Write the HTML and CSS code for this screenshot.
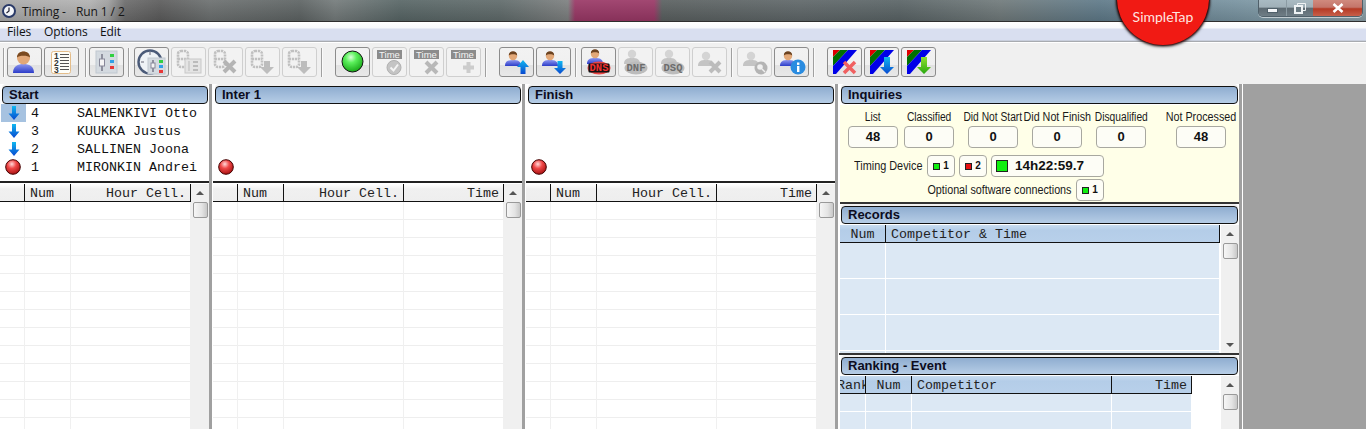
FILE: index.html
```html
<!DOCTYPE html>
<html lang="en">
<head>
<meta charset="utf-8">
<title>Timing - Run 1 / 2</title>
<link rel="stylesheet" href="styles.css">
</head>
<body>
<svg class="defs" aria-hidden="true">
  <defs>
    <radialGradient id="gBall" cx=".42" cy=".3" r=".75"><stop offset="0" stop-color="#d8ffd8"/><stop offset=".35" stop-color="#5cf05c"/><stop offset="1" stop-color="#10a010"/></radialGradient>
    <radialGradient id="rBall" cx=".42" cy=".3" r=".75"><stop offset="0" stop-color="#ffd8d8"/><stop offset=".4" stop-color="#f04848"/><stop offset="1" stop-color="#a00c0c"/></radialGradient>
    <linearGradient id="body" x1="0" y1="0" x2="0" y2="1"><stop offset="0" stop-color="#8c96f0"/><stop offset="1" stop-color="#2c3cc8"/></linearGradient>
    <linearGradient id="arrB" x1="0" y1="0" x2="0" y2="1"><stop offset="0" stop-color="#10b8f0"/><stop offset="1" stop-color="#0848d0"/></linearGradient>
    <linearGradient id="arrG" x1="0" y1="0" x2="0" y2="1"><stop offset="0" stop-color="#90e030"/><stop offset="1" stop-color="#28a810"/></linearGradient>
    <g id="pSmall"><path d="M5 18c0-5 3-6 8-6s8 1 8 6z" fill="url(#body)"/><circle cx="13" cy="8" r="4.2" fill="#e2a878"/><path d="M8.8 7.5c0-3 2-4.3 4.2-4.3s4.2 1.3 4.2 4.3c-1.5-1.8-6.900-1.8-8.400 0z" fill="#6b4220"/></g>
    <g id="pGray"><path d="M5 18c0-5 3-6 8-6s8 1 8 6z" fill="#c4c4c4"/><circle cx="13" cy="8" r="4.2" fill="#d4d4d4"/></g>
    <g id="seg" fill="none" stroke="#c0c0c0" stroke-width="2.600" stroke-dasharray="2.200 .8"><rect x="6" y="3" width="10" height="16" rx="3"/><path d="M6 11h10"/></g>
    <g id="stripeIcon"><path d="M5 2h7L5 9z" fill="#e00000"/><path d="M12 2h8L5 18V9z" fill="#007000"/><path d="M20 2h9L8 26H5v-8z" fill="#0000e8"/></g>
    <symbol id="iPerson" viewBox="0 0 33 28"><path d="M5 25c0-7 5-9 10.500-9S26 18 26 25z" fill="url(#body)"/><circle cx="15.500" cy="10" r="6.500" fill="#e2a878"/><path d="M9 9.500c0-4 3-6 6.500-6s6.500 2 6.500 6c-2-2.500-11-2.500-13 0z" fill="#7a4a20"/></symbol>
    <symbol id="iList" viewBox="0 0 33 28"><rect x="6.500" y="3.500" width="19" height="22" rx="2" fill="#fdfdf8" stroke="#e4bd8a"/><text class="ic-num" x="9" y="10.500">1</text><text class="ic-num" x="9" y="17.500">2</text><text class="ic-num" x="9" y="24.500">3</text><path d="M15 6.500h9M15 9.500h9M15 12.500h9M15 15.500h9M15 18.500h9M15 21.500h9" stroke="#555"/></symbol>
    <symbol id="iSliders" viewBox="0 0 33 28"><rect x="6" y="3" width="21" height="22" fill="#d4dae0" stroke="#c0c8d0"/><path d="M12 6v17" stroke="#778" stroke-width="1.500"/><rect x="9.500" y="11" width="5" height="7" fill="#f4f4f4" stroke="#889"/><rect x="20" y="6" width="4" height="3" fill="#30d040"/><rect x="20" y="12" width="4" height="3" fill="#30a0e8"/><rect x="20" y="18" width="4" height="3" fill="#e83838"/></symbol>
    <symbol id="iClock" viewBox="0 0 33 28"><circle cx="15" cy="14" r="11.500" fill="#eef2f6" stroke="#4a5a78" stroke-width="2.400"/><path d="M15 4v3M6 14h3" stroke="#667"/><rect x="13" y="10" width="17" height="16" fill="#d4dae0" stroke="#c0c8d0"/><path d="M18 12v12" stroke="#778" stroke-width="1.500"/><rect x="16" y="15" width="4" height="5" fill="#f4f4f4" stroke="#889"/><rect x="24" y="12" width="4" height="3" fill="#30d040"/><rect x="24" y="17" width="4" height="3" fill="#30a0e8"/><rect x="24" y="22" width="4" height="3" fill="#e83838"/></symbol>
    <symbol id="iSegGrid" viewBox="0 0 33 28"><use href="#seg"/><rect x="13" y="11" width="16" height="14" fill="#e4e4e4" stroke="#c8c8c8"/><path d="M17 13v10" stroke="#bbb"/><path d="M21 14h5M21 18h5M21 22h5" stroke="#bbb" stroke-width="2"/></symbol>
    <symbol id="iSegX" viewBox="0 0 33 28"><use href="#seg"/><path d="M15 13l11 11M26 13L15 24" stroke="#b4b4b4" stroke-width="4"/></symbol>
    <symbol id="iSegDown" viewBox="0 0 33 28"><use href="#seg"/><path d="M18 13h6v6h4l-7 7-7-7h4z" fill="#bdbdbd"/></symbol>
    <symbol id="iBall" viewBox="0 0 33 28"><circle cx="16.500" cy="13.500" r="10.500" fill="url(#gBall)" stroke="#111"/></symbol>
    <symbol id="iTCheck" viewBox="0 0 33 28"><rect x="4" y="2" width="25" height="9" fill="#8c8c8c"/><text class="ic-time" x="16.500" y="10">Time</text><circle cx="21" cy="19.500" r="7" fill="#c4c4c4" stroke="#b0b0b0"/><path d="M17.500 19.500l3 3 4.500-6" fill="none" stroke="#f4f4f4" stroke-width="2"/></symbol>
    <symbol id="iTX" viewBox="0 0 33 28"><rect x="4" y="2" width="25" height="9" fill="#8c8c8c"/><text class="ic-time" x="16.500" y="10">Time</text><path d="M16 14l11 11M27 14L16 25" stroke="#b8b8b8" stroke-width="4"/></symbol>
    <symbol id="iTPlus" viewBox="0 0 33 28"><rect x="4" y="2" width="25" height="9" fill="#8c8c8c"/><text class="ic-time" x="16.500" y="10">Time</text><path d="M21.500 14v11M16 19.500h11" stroke="#ccc" stroke-width="4"/></symbol>
    <symbol id="iPUp" viewBox="0 0 33 28"><use href="#pSmall"/><path d="M23 12l6 7h-3.500v7h-5v-7H17z" fill="url(#arrB)"/></symbol>
    <symbol id="iPDown" viewBox="0 0 33 28"><use href="#pSmall"/><path d="M20.500 13h5v7H29l-6 6-6-6h3.500z" fill="url(#arrB)"/></symbol>
    <symbol id="iDNS" viewBox="0 0 33 28"><use href="#pSmall" x="0" y="-2"/><ellipse cx="17" cy="20" rx="11.500" ry="6.500" fill="#ec4444"/><rect x="6.500" y="15.500" width="21" height="9" rx="1" fill="#111"/><text class="ic-dns" x="17" y="23.300" fill="#f03030">DNS</text></symbol>
    <symbol id="iDNF" viewBox="0 0 33 28"><use href="#pGray" x="0" y="-2"/><ellipse cx="17" cy="20" rx="11.500" ry="6.500" fill="#bcbcbc"/><text class="ic-dns" x="17" y="23.300" fill="#6c6c6c">DNF</text></symbol>
    <symbol id="iDSQ" viewBox="0 0 33 28"><use href="#pGray" x="0" y="-2"/><ellipse cx="17" cy="20" rx="11.500" ry="6.500" fill="#bcbcbc"/><text class="ic-dns" x="17" y="23.300" fill="#6c6c6c">DSQ</text></symbol>
    <symbol id="iPX" viewBox="0 0 33 28"><use href="#pGray"/><path d="M17 14l10 10M27 14L17 24" stroke="#bcbcbc" stroke-width="4"/></symbol>
    <symbol id="iPFind" viewBox="0 0 33 28"><use href="#pGray"/><circle cx="23" cy="20" r="6.500" fill="#b4b4b4"/><circle cx="22" cy="19" r="2.800" fill="#f0f0f0"/><path d="M24 21l3 3" stroke="#f0f0f0" stroke-width="1.500"/></symbol>
    <symbol id="iPInfo" viewBox="0 0 33 28"><use href="#pSmall"/><circle cx="23" cy="19" r="7.500" fill="#2a8ce0"/><rect x="22" y="18" width="2.400" height="6" fill="#fff"/><rect x="22" y="14.500" width="2.400" height="2.400" fill="#fff"/></symbol>
    <symbol id="iStripeX" viewBox="0 0 33 28"><use href="#stripeIcon"/><path d="M16 14l11 11M27 14L16 25" stroke="#f06060" stroke-width="3.500"/></symbol>
    <symbol id="iStripeB" viewBox="0 0 33 28"><use href="#stripeIcon"/><path d="M19 9h6v10h4l-7 7-7-7h4z" fill="url(#arrB)"/></symbol>
    <symbol id="iStripeG" viewBox="0 0 33 28"><use href="#stripeIcon"/><path d="M19 9h6v10h4l-7 7-7-7h4z" fill="url(#arrG)"/></symbol>
    <symbol id="iArrow" viewBox="0 0 12 14"><path d="M4 0h4v7.500h3.500L6 14 .500 7.500H4z" fill="url(#arrB)"/></symbol>
    <symbol id="iRed" viewBox="0 0 16 16"><circle cx="8" cy="8" r="7.300" fill="url(#rBall)" stroke="#400"/></symbol>
  </defs>
</svg>

<header class="titlebar">
  <svg class="app-icon" viewBox="0 0 14 14"><circle cx="7" cy="7" r="6" fill="#f4f6fa" stroke="#2a3a68" stroke-width="2"/><path d="M7 3.500V7l-2.500 2" fill="none" stroke="#223" stroke-width="1.200"/></svg>
  <span class="title-text">Timing -</span>
  <span class="title-run">Run 1 / 2</span>
  <div class="win-controls">
    <div class="win-btn win-min"><span class="min-glyph"></span></div>
    <div class="win-btn win-max"><svg viewBox="0 0 12 11" class="max-glyph"><path d="M3.500 3V.500h8v7H9" fill="none" stroke="#eef2f4"/><rect x="1" y="3" width="7" height="7" fill="#6a7a82" stroke="#eef2f4" stroke-width="2"/></svg></div>
    <div class="win-btn win-close"><svg viewBox="0 0 12 10" class="x-glyph"><path d="M1.500 1l9 8M10.500 1l-9 8" stroke="#fff" stroke-width="2.600"/></svg></div>
  </div>
</header>
<div class="badge"><span>SimpleTap</span></div>

<nav class="menubar"><span class="m-files">Files</span><span class="m-options">Options</span><span class="m-edit">Edit</span></nav>

<div class="toolbar">
  <span class="sep sep-first"></span>
  <button class="tb"><svg><use href="#iPerson"/></svg></button>
  <button class="tb"><svg><use href="#iList"/></svg></button>
  <span class="sep sep-b"></span>
  <button class="tb"><svg><use href="#iSliders"/></svg></button>
  <span class="sep"></span>
  <button class="tb"><svg><use href="#iClock"/></svg></button>
  <button class="tb off"><svg><use href="#iSegGrid"/></svg></button>
  <button class="tb off"><svg><use href="#iSegX"/></svg></button>
  <button class="tb off"><svg><use href="#iSegDown"/></svg></button>
  <button class="tb off"><svg><use href="#iSegDown"/></svg></button>
  <span class="sep wide"></span>
  <button class="tb"><svg><use href="#iBall"/></svg></button>
  <button class="tb off"><svg><use href="#iTCheck"/></svg></button>
  <button class="tb off"><svg><use href="#iTX"/></svg></button>
  <button class="tb off"><svg><use href="#iTPlus"/></svg></button>
  <span class="sep wide"></span>
  <button class="tb"><svg><use href="#iPUp"/></svg></button>
  <button class="tb"><svg><use href="#iPDown"/></svg></button>
  <span class="sep"></span>
  <button class="tb"><svg><use href="#iDNS"/></svg></button>
  <button class="tb off"><svg><use href="#iDNF"/></svg></button>
  <button class="tb off"><svg><use href="#iDSQ"/></svg></button>
  <button class="tb off"><svg><use href="#iPX"/></svg></button>
  <span class="sep"></span>
  <button class="tb off"><svg><use href="#iPFind"/></svg></button>
  <button class="tb"><svg><use href="#iPInfo"/></svg></button>
  <span class="sep wide"></span>
  <button class="tb"><svg><use href="#iStripeX"/></svg></button>
  <button class="tb"><svg><use href="#iStripeB"/></svg></button>
  <button class="tb"><svg><use href="#iStripeG"/></svg></button>
</div>

<main class="main">
  <section class="panel p-start">
    <h2 class="head">Start</h2>
    <div class="list">
      <div class="row"><span class="ico sel"><svg class="arrow"><use href="#iArrow"/></svg></span><span class="num">4</span><span class="name">SALMENKIVI Otto</span></div>
      <div class="row"><span class="ico"><svg class="arrow"><use href="#iArrow"/></svg></span><span class="num">3</span><span class="name">KUUKKA Justus</span></div>
      <div class="row"><span class="ico"><svg class="arrow"><use href="#iArrow"/></svg></span><span class="num">2</span><span class="name">SALLINEN Joona</span></div>
      <div class="row"><span class="ico"><svg class="ball"><use href="#iRed"/></svg></span><span class="num">1</span><span class="name">MIRONKIN Andrei</span></div>
    </div>
    <div class="tablewrap">
      <div class="table">
        <div class="thead"><div class="th w25"></div><div class="th w46">Num</div><div class="th w120 right">Hour Cell.</div></div>
        <div class="tbody"><div class="td w25"></div><div class="td w46"></div><div class="td w120"></div></div>
      </div>
      <div class="scroll"><span class="up"></span><span class="thumb"></span></div>
    </div>
  </section>

  <section class="panel">
    <h2 class="head">Inter 1</h2>
    <div class="list"><div class="row"><span class="ico"><svg class="ball"><use href="#iRed"/></svg></span></div></div>
    <div class="tablewrap">
      <div class="table">
        <div class="thead"><div class="th w25"></div><div class="th w46">Num</div><div class="th w120 right">Hour Cell.</div><div class="th w100 right">Time</div></div>
        <div class="tbody"><div class="td w25"></div><div class="td w46"></div><div class="td w120"></div><div class="td w100"></div></div>
      </div>
      <div class="scroll"><span class="up"></span><span class="thumb"></span></div>
    </div>
  </section>

  <section class="panel">
    <h2 class="head">Finish</h2>
    <div class="list"><div class="row"><span class="ico"><svg class="ball"><use href="#iRed"/></svg></span></div></div>
    <div class="tablewrap">
      <div class="table">
        <div class="thead"><div class="th w25"></div><div class="th w46">Num</div><div class="th w120 right">Hour Cell.</div><div class="th w100 right">Time</div></div>
        <div class="tbody"><div class="td w25"></div><div class="td w46"></div><div class="td w120"></div><div class="td w100"></div></div>
      </div>
      <div class="scroll"><span class="up"></span><span class="thumb"></span></div>
    </div>
  </section>

  <aside class="side">
    <section class="inq">
      <h2 class="head">Inquiries</h2>
      <div class="inq-body">
        <div class="stats">
          <div class="stat"><span class="lbl">List</span><b class="box">48</b></div>
          <div class="stat g6"><span class="lbl">Classified</span><b class="box">0</b></div>
          <div class="stat g14"><span class="lbl">Did Not Start</span><b class="box">0</b></div>
          <div class="stat g14"><span class="lbl lbl-wide">Did Not Finish</span><b class="box">0</b></div>
          <div class="stat g14"><span class="lbl">Disqualified</span><b class="box">0</b></div>
          <div class="stat g30"><span class="lbl lbl-wide">Not Processed</span><b class="box">48</b></div>
        </div>
        <div class="device">
          <span class="lbl dev-lbl">Timing Device</span>
          <b class="box chip"><i class="led green"></i>1</b>
          <b class="box chip"><i class="led red"></i>2</b>
          <b class="box clock"><i class="led big green"></i>14h22:59.7</b>
        </div>
        <div class="optional">
          <span class="lbl opt-lbl">Optional software connections</span>
          <b class="box chip"><i class="led green"></i>1</b>
        </div>
      </div>
    </section>

    <section class="rec">
      <h2 class="head">Records</h2>
      <div class="tablewrap blue">
        <div class="table">
          <div class="thead"><div class="th w46 center">Num</div><div class="th w334">Competitor &amp; Time</div></div>
          <div class="tbody tall"><div class="td w46"></div><div class="td w334"></div></div>
        </div>
        <div class="scroll"><span class="up"></span><span class="thumb"></span><span class="down"></span></div>
      </div>
    </section>

    <section class="rank">
      <h2 class="head">Ranking - Event</h2>
      <div class="tablewrap blue">
        <div class="table">
          <div class="thead"><div class="th w26 clip">Rank</div><div class="th w46 center">Num</div><div class="th w200">Competitor</div><div class="th w80 right">Time</div></div>
          <div class="tbody"><div class="td w26"></div><div class="td w46"></div><div class="td w200"></div><div class="td w80"></div></div>
        </div>
        <div class="scroll"><span class="up"></span><span class="thumb"></span></div>
      </div>
    </section>
  </aside>
  <div class="desk"></div>
</main>
</body>
</html>
```
FILE: styles.css
```css
* { box-sizing: border-box; }
html, body { margin: 0; padding: 0; }
body {
  width: 1366px; height: 429px; overflow: hidden; position: relative;
  background: #fff; font-family: "Liberation Sans", Arial, sans-serif; color: #111;
}
.defs { position: absolute; width: 0; height: 0; }
.ic-num { font: 700 8.500px "Liberation Sans", sans-serif; fill: #333; }
.ic-time { font: 400 9.500px "Liberation Sans", sans-serif; fill: #f4f4f4; text-anchor: middle; }
.ic-dns { font: 700 10.500px "Liberation Mono", monospace; text-anchor: middle; }

/* title bar */
.titlebar {
  height: 22px; display: flex; align-items: flex-start;
  border-bottom: 1px solid #2e2e2e;
  background:
    linear-gradient(180deg, rgba(255,255,255,.08), rgba(0,0,0,.12)),
    linear-gradient(90deg, #ababab 0, #b2b2b2 90px, #a0a0a0 108px, #6c6c6c 125px, #5c5c5c 160px, #6c7070 210px, #5e6464 300px, #747b7b 335px, #586666 400px, #606b6b 500px, #7d8080 568px, #9a3866 575px, #9a3866 654px, #5a6060 662px, #5f6769 800px, #5a6466 900px, #707a7b 1000px, #5f7a89 1100px, #7d98a5 1260px, #8ca0a8 1366px);
}
.app-icon { width: 14px; height: 14px; margin: 4px 0 0 2px; flex: none; }
.title-text, .title-run { font: 400 12px/23px "Open Sans", sans-serif; letter-spacing: -.1px; color: #161616; }
.title-text { margin-left: 6px; width: 54px; }
.title-run { width: 60px; }
.win-controls {
  margin-left: auto; margin-right: 3px; display: flex; height: 17px;
  border: 1px solid #50606a; border-top: 0; border-radius: 0 0 5px 5px; overflow: hidden;
  box-shadow: 0 1px 0 rgba(255,255,255,.55);
}
.win-btn { display: flex; align-items: center; justify-content: center; height: 100%; }
.win-min { width: 28px; background: linear-gradient(#a9bac2 0, #a0b0b8 45%, #5d6a72 50%, #6f7d85); border-right: 1px solid #8b9ba3; padding-top: 4px; }
.win-max { width: 26px; background: linear-gradient(#a9bac2 0, #a0b0b8 45%, #5d6a72 50%, #6f7d85); }
.win-close { width: 49px; background: linear-gradient(#d08a7e 0, #c4756a 45%, #b53a25 55%, #c8604a); }
.min-glyph { width: 9px; height: 3px; background: #f4f6f8; border: 1px solid #50606a; box-sizing: content-box; }
.max-glyph { width: 12px; height: 11px; }
.x-glyph { width: 12px; height: 10px; }

/* overlay badge */
.badge {
  position: absolute; left: 1117px; top: -47px; width: 92px; height: 92px; border-radius: 50%;
  background: #f11a14; box-shadow: 0 0 2px 1px #2a0505, 0 1px 3px 1px rgba(0,0,0,.5);
  display: flex; align-items: flex-end; justify-content: center; padding-bottom: 20px; z-index: 5;
}
.badge span { font: 400 14px/17px "Lato", "Liberation Sans", sans-serif; color: #ffe6e0; }

/* menu */
.menubar {
  height: 20px; display: flex; padding-left: 7px;
  background: linear-gradient(#fff 0, #f8f9fc 6px, #d9dff0 7px, #d9dff0 100%);
  border-bottom: 1px solid #a8abb0; box-shadow: inset 0 -1px 0 #c8cedc;
  font: 400 12px/20px "Open Sans", sans-serif; letter-spacing: -.1px; color: #111;
}
.m-files { width: 37px; } .m-options { width: 56px; }

/* toolbar */
.toolbar {
  height: 42px; background: #f0f0f0; display: flex; align-items: flex-start; gap: 2px; padding-top: 4px; padding-left: 3px;
  border-top: 1px solid #fff;
}
.tb {
  width: 35px; height: 30px; padding: 0; border: 1px solid #8c8c8c; border-radius: 3px; flex: none; display: block;
  background: linear-gradient(#f2f2f2 0, #f0f0f0 60%, #e2e2e2 62%, #e8e8e8 100%);
}
.tb.off { border-color: #cfcfcf; background: #f2f2f2; }
.tb svg { display: block; width: 33px; height: 28px; }
.sep { width: 1px; height: 29px; background: #a0a0a0; margin: 1px 3px 0 2px; flex: none; box-shadow: 1px 0 0 #fafafa; }
.sep.wide { margin: 1px 11px 0 2px; }
.sep-first { margin: 1px 1px 0 0; }
.sep-b { margin: 1px 1px 0 4px; }

/* main */
.main { height: 345px; display: flex; background: #fff; }
.panel {
  width: 312px; display: flex; flex-direction: column; flex: none;
  border-right: 3px solid #a0a0a0; margin-right: 1px;
}
.p-start { width: 212px; }
.head {
  height: 18px; margin: 2px 1px 0 2px; padding-left: 6px; flex: none;
  border: 1px solid #111; border-radius: 4px;
  background: linear-gradient(#8fadd0, #b6cde6);
  font: 700 13px/16px "Liberation Sans", sans-serif; color: #0c0c20;
}
.panel > .head, .side .head { box-shadow: 0 -2px 0 #f0f0f0; }
.list {
  height: 79px; display: flex; flex-direction: column; justify-content: flex-end; padding-bottom: 5px; flex: none;
  font: 400 13.330px/18px "Liberation Mono", monospace; color: #111;
  border-bottom: 2px solid #222;
}
.row { height: 18px; display: flex; align-items: center; }
.ico { width: 25px; height: 18px; margin-left: 1px; display: flex; align-items: center; justify-content: center; flex: none; }
.ico.sel { background: #a6c2e0; }
.ball { width: 16px; height: 16px; margin-left: -2px; }
.arrow { width: 12px; height: 14px; }
.num { width: 46px; margin-left: 5px; flex: none; padding-top: 2px; }
.name { white-space: nowrap; padding-top: 2px; }

/* tables */
.tablewrap { flex: 1; min-height: 0; display: flex; justify-content: space-between; padding-top: 1px; overflow: hidden; }
.table { display: flex; flex-direction: column; flex: none; }
.thead {
  display: flex; height: 18px; flex: none; border-bottom: 1px solid #111;
  font: 400 13.330px/19px "Liberation Mono", monospace; color: #222;
}
.th {
  height: 17px; border-right: 1px solid #111; padding: 0 4px 0 5px; white-space: nowrap; overflow: hidden;
  background: linear-gradient(#fff 0, #f0f0f0 30%, #eeeeee 100%);
}
.th:first-child { padding-left: 0; }
.th.right { text-align: right; }
.th.center { text-align: center; padding: 0; }
.th.clip { text-indent: -3px; padding: 0; }
.tbody { display: flex; flex: 1; min-height: 400px; }
.td {
  border-right: 1px solid #f0f0f0;
  background: repeating-linear-gradient(#fff 0, #fff 17px, #eeeeee 17px, #eeeeee 18px);
}
.w25 { width: 25px; } .w26 { width: 26px; } .w46 { width: 46px; } .w80 { width: 80px; }
.w100 { width: 100px; } .w120 { width: 120px; } .w200 { width: 200px; } .w334 { width: 334px; }
.scroll {
  width: 18px; flex: none; background: #f0f0f0; display: flex; flex-direction: column; align-items: center;
}
.up { width: 0; height: 0; margin: 7px 0 7px; border: 4px solid transparent; border-top: 0; border-bottom: 4px solid #555; box-sizing: content-box; }
.thumb {
  width: 15px; height: 16px; border: 1px solid #999; border-radius: 2px;
  background: linear-gradient(90deg, #f6f6f6, #e4e4e4 60%, #c8c8c8);
}
.down { width: 0; height: 0; margin-top: auto; margin-bottom: 6px; border: 4px solid transparent; border-bottom: 0; border-top: 4px solid #555; box-sizing: content-box; }

/* side */
.side { width: 403px; flex: none; display: flex; flex-direction: column; border-right: 3px solid #a0a0a0; margin-right: 1px; }
.inq { height: 120px; display: flex; flex-direction: column; flex: none; }
.inq-body {
  flex: 1; margin: 1px 0 0 1px; background: #ffffe8; border-bottom: 2px solid #333; padding: 0 0 0 8px;
  display: flex; flex-direction: column; min-height: 0;
}
.lbl { display: block; font: 400 12.500px/14px "Liberation Sans", sans-serif; color: #1a1a1a; white-space: nowrap; transform: scaleX(.82); }
.lbl-wide { transform: scaleX(.86); }
.stats { display: flex; margin-top: 6px; }
.stat { width: 50px; display: flex; flex-direction: column; align-items: center; flex: none; }
.stat .lbl { margin: -1px -20px 0; height: 16px; }
.g6 { margin-left: 6px; } .g14 { margin-left: 14px; } .g30 { margin-left: 30px; }
.box {
  height: 22px; border: 1px solid #a8a8a0; border-radius: 4px; background: #fdfdf6; display: flex; align-items: center; justify-content: center; flex: none;
  font: 700 13px/20px "Liberation Sans", sans-serif; color: #111;
}
.stat .box { width: 50px; }
.device { display: flex; align-items: center; margin-top: 7px; gap: 4px; padding-left: 6px; }
.dev-lbl { width: 67px; margin-right: 2px; transform-origin: left center; transform: scaleX(.87); }
.chip { width: 28px; gap: 3px; font-size: 10px; }
.clock { width: 113px; justify-content: flex-start; padding-left: 4px; gap: 7px; font-size: 13.500px; }
.led { width: 7px; height: 7px; border: 1px solid #222; display: block; }
.led.green { background: #10f010; }
.led.red { background: #e81010; }
.led.big { width: 12px; height: 12px; }
.optional { display: flex; align-items: center; justify-content: flex-end; margin-top: 2px; gap: 5px; width: 256px; }
.opt-lbl { transform-origin: right center; transform: scaleX(.86); }
.rec { height: 151px; display: flex; flex-direction: column; flex: none; border-bottom: 2px solid #333; }
.rank { flex: 1; min-height: 0; display: flex; flex-direction: column; }
.rec .tablewrap, .rank .tablewrap { padding-left: 1px; }
.blue .th { background: linear-gradient(#c8dcf0, #b4cde8 30%, #b8d0ea); }
.blue .td { border-right: 1px solid #fff; background: repeating-linear-gradient(#dce8f4 0, #dce8f4 17px, #fff 17px, #fff 18px); }
.blue .tall .td { background: repeating-linear-gradient(#dce8f4 0, #dce8f4 35px, #fff 35px, #fff 36px); }
.rec .tablewrap { flex: 1; }
.rec .tbody { min-height: 0; }
.rank .tbody { min-height: 40px; }
.desk { flex: 1; background: #a0a0a0; }
```
